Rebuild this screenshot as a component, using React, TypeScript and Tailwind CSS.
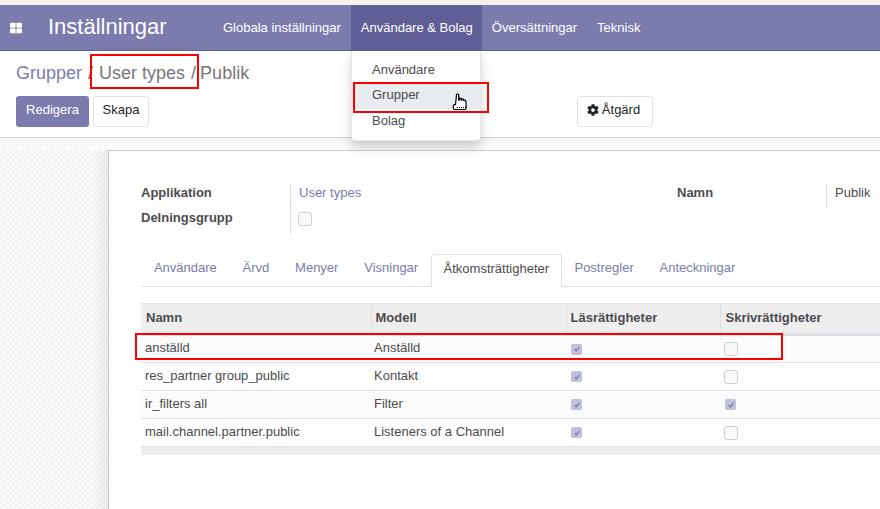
import { FaCog, FaThLarge } from "react-icons/fa";

const sans = "font-['Liberation_Sans',Arial,sans-serif]";

const rows = [
  { namn: "anställd", modell: "Anställd", las: true, skriv: false },
  { namn: "res_partner group_public", modell: "Kontakt", las: true, skriv: false },
  { namn: "ir_filters all", modell: "Filter", las: true, skriv: true },
  { namn: "mail.channel.partner.public", modell: "Listeners of a Channel", las: true, skriv: false },
];

const tabs = ["Användare", "Ärvd", "Menyer", "Visningar", "Åtkomsträttigheter", "Postregler", "Anteckningar"];

function Check({ on }: { on: boolean }) {
  if (!on) return <span className="block w-[14px] h-[14px] rounded-[3px] border border-[#d0d0d0] bg-[#f8f8f8]" />;
  return (
    <span className="flex items-center justify-center w-[11px] h-[11px] rounded-[2px] bg-[#c0bfdc] ml-px">
      <svg viewBox="0 0 10 10" className="w-[8px] h-[8px]" fill="none" stroke="#7c7bad" strokeWidth="1.6">
        <path d="M2 5.2 4 7.2 8 2.8" />
      </svg>
    </span>
  );
}

// X11-style hand pointer
function HandCursor() {
  return (
    <svg viewBox="0 0 18 18" className="w-[18px] h-[18px]" stroke="#000" strokeWidth="1.2" fill="#fff" strokeLinejoin="round">
      <path d="M4.5 1.5c.8-.8 2-.6 2.2.6v5h.6V5.6c.5-.7 1.5-.7 1.8 0v1.6h.5V6.4c.5-.6 1.5-.6 1.8.1v1h.5c.5-.6 1.4-.4 1.6.3l.6 1.8v5.4c0 .9-.6 1.5-1.5 1.5H3c-1 0-1.7-.7-1.7-1.6v-2c0-.8.6-1.2 1.4-1.2h.8z" />
      <path d="M5 14.5h9" strokeDasharray="1 1" strokeWidth="1" />
    </svg>
  );
}

export default function App() {
  return (
    <div className={`${sans} relative w-[880px] h-[509px] overflow-hidden bg-white text-[13px] text-[#4c4c4c]`}>
      {/* Rand ovanför menyn */}
      <div className="h-[5px] bg-[#f3f1ee]" />

      {/* Toppmeny */}
      <div className="flex h-[46px] bg-[#7c7bad] border-b border-[#5f5e97] text-white">
        <div className="flex items-center w-[48px] pl-[10px]">
          <FaThLarge className="w-[12px] h-[12px]" />
        </div>
        <div className="w-[165px] text-[22px] leading-[44px]">Inställningar</div>
        <div className="flex leading-[45px]">
          <div className="px-[10px]">Globala inställningar</div>
          <div className="pl-[10px] pr-[9px] bg-[#5f5e97]">Användare &amp; Bolag</div>
          <div className="px-[10px]">Översättningar</div>
          <div className="px-[10px]">Teknisk</div>
        </div>
      </div>

      {/* Kontrollpanel */}
      <div className="h-[87px] border-b border-[#cfcfcf] pl-[16px]">
        <div className="pt-[11px] text-[18px] leading-[22px] text-[#777]">
          <span className="text-[#7c7bad]">Grupper</span>
          <span className="mx-[6px]">/</span>
          User types
          <span className="ml-[6px] mr-[4px]">/</span>
          Publik
        </div>
        <div className="flex mt-[12px]">
          <div className="w-[73px] h-[31px] rounded-[3px] bg-[#7c7bad] text-white text-center leading-[27px]">Redigera</div>
          <div className="w-[56px] h-[31px] ml-[4px] rounded-[3px] border border-[#dee2e6] text-[#212529] text-center leading-[25px]">Skapa</div>
          <div className="flex items-center justify-center gap-[3px] w-[76px] h-[31px] ml-[428px] rounded-[3px] border border-[#dee2e6] text-[#212529] pb-[3px] pr-[3px]">
            <FaCog className="w-[12px] h-[12px]" />
            Åtgärd
          </div>
        </div>
      </div>

      {/* Innehåll */}
      <div className="relative h-[371px] pt-[12px] pl-[108px] bg-[linear-gradient(#f6f6f6,#fbfbfb_12px,#ffffff_12px)]">
        <div className="absolute left-0 w-[108px] top-[12px] bottom-0 bg-[linear-gradient(to_right,rgba(0,0,0,0)_85%,rgba(0,0,0,0.06)),repeating-conic-gradient(#f2f2f2_0%_25%,#fcfcfc_0%_50%)] bg-[length:100%_100%,6px_6px]" />
        <div className="relative h-full border-l border-t border-[#c9c6d6] bg-white pl-[32px] pt-[34px]">
          {/* Formulär */}
          <div className="flex">
            <div className="w-[149px] font-bold leading-[16px]">
              <div>Applikation</div>
              <div className="mt-[9px]">Delningsgrupp</div>
            </div>
            <div className="w-[387px] h-[49px] border-l border-[#dcdcdc] pl-[8px]">
              <div className="text-[#7c7bad] leading-[16px]">User types</div>
              <div className="mt-[11px] -ml-px w-[14px] h-[14px] rounded-[3px] border border-[#d0d0d0] bg-[#f8f8f8]" />
            </div>
            <div className="w-[149px] font-bold leading-[16px]">Namn</div>
            <div className="h-[24px] border-l border-[#dcdcdc] pl-[8px] leading-[16px]">Publik</div>
          </div>

          {/* Flikar */}
          <div className="flex h-[33px] mt-[20px] border-b border-[#dee2e6] whitespace-nowrap">
            {tabs.map((t) =>
              t === "Åtkomsträttigheter" ? (
                <div key={t} className="h-[33px] px-[11.5px] leading-[28px] border border-b-0 border-[#dee2e6] rounded-t-[3px] bg-white text-[#4c4c4c]">
                  {t}
                </div>
              ) : (
                <div key={t} className="px-[12.9px] leading-[28px] text-[#7c7bad]">
                  {t}
                </div>
              ),
            )}
          </div>

          {/* Tabell */}
          <table className="mt-[16px] table-fixed w-[800px] border-collapse text-left">
            <thead>
              <tr className="h-[31px] bg-[#eeeeee] border-t border-[#e4e4e4] border-b-[3px] border-b-[#dee2e6] font-bold">
                <th className="w-[230px] pl-[5px] pb-[2px]">Namn</th>
                <th className="w-[195px] pl-[4px] pb-[2px] border-l border-[#e0e0e0]">Modell</th>
                <th className="w-[154px] pl-[4px] pb-[2px] border-l border-[#e0e0e0]">Läsrättigheter</th>
                <th className="pl-[5px] pb-[2px] border-l border-[#e0e0e0]">Skrivrättigheter</th>
              </tr>
            </thead>
            <tbody>
              {rows.map((r, i) => (
                <tr key={r.namn} className={`h-[28px] border-b border-[#dee2e6] ${i % 2 === 0 ? "bg-[#fbfbfb]" : "bg-white"}`}>
                  <td className="pl-[4px] pb-[2px]">{r.namn}</td>
                  <td className="pl-[3px] pb-[2px]">{r.modell}</td>
                  <td className="pl-[4px]"><Check on={r.las} /></td>
                  <td className="pl-[4px]"><Check on={r.skriv} /></td>
                </tr>
              ))}
            </tbody>
          </table>
          <div className="w-[800px] h-[8px] bg-[#eeeeee]" />
        </div>
      </div>

      {/* Rullgardinsmeny */}
      <div className="absolute left-[351px] top-[51px] w-[130px] h-[90px] pt-[7px] rounded-b-[3px] bg-white border border-t-0 border-[#e4e4e4] shadow-[0_6px_12px_rgba(0,0,0,0.18)] text-[#4c4c4c]">
        <div className="pl-[20px] h-[25px] leading-[24px]">Användare</div>
        <div className="pl-[20px] h-[26px] leading-[24px] bg-[#e9ecef]">Grupper</div>
        <div className="pl-[20px] h-[25px] leading-[23px]">Bolag</div>
      </div>
      <div className="absolute left-[452px] top-[93px]">
        <HandCursor />
      </div>

      {/* Röda markeringar */}
      <div className="absolute left-[90px] top-[54px] w-[109px] h-[35px] border-2 border-[#ff0000]" />
      <div className="absolute left-[353px] top-[82px] w-[136px] h-[31px] border-2 border-[#ff0000]" />
      <div className="absolute left-[135px] top-[333px] w-[648px] h-[27px] border-2 border-[#ff0000]" />
    </div>
  );
}
